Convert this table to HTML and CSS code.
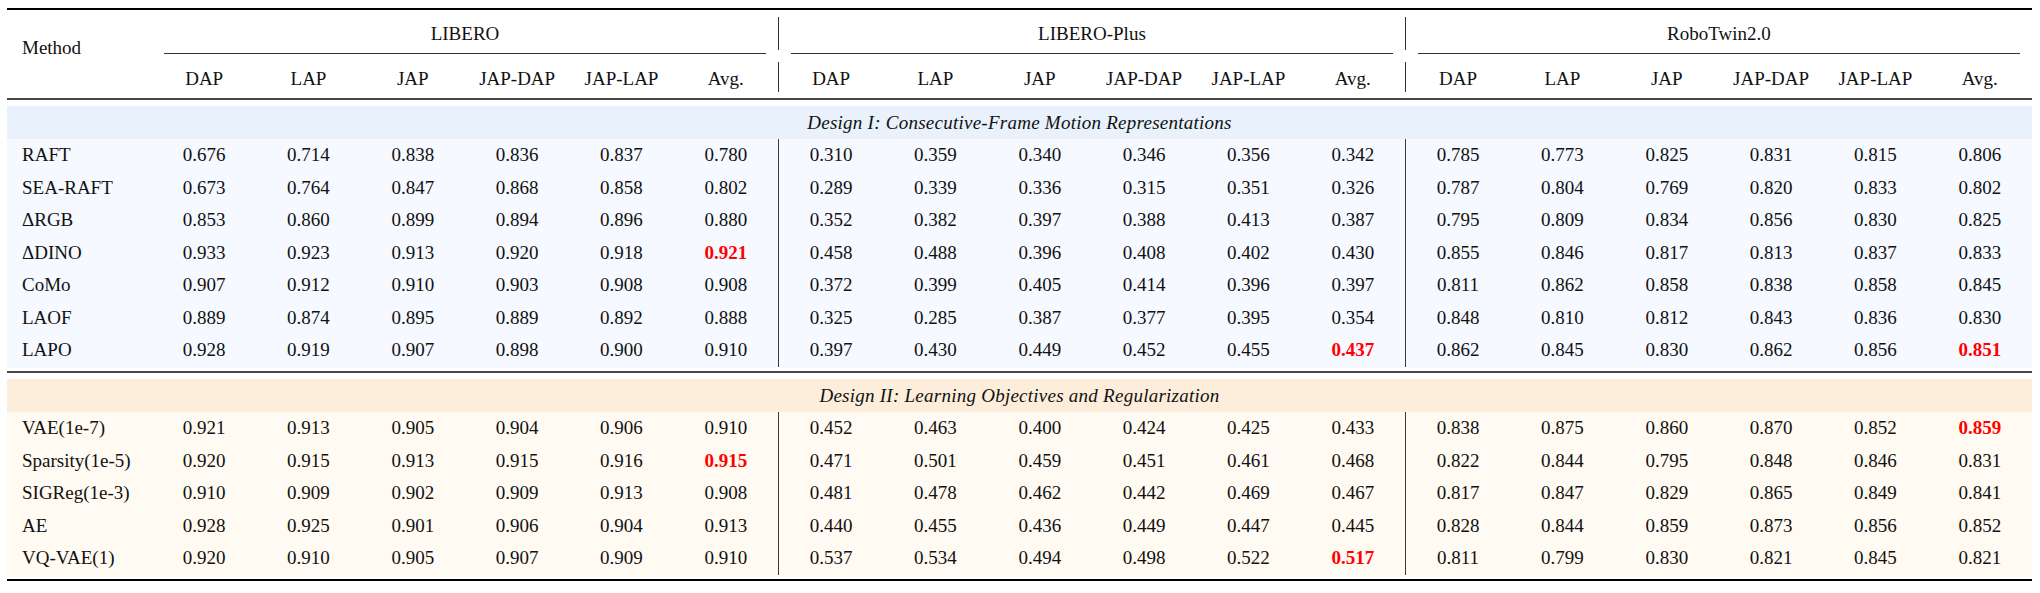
FILE: index.html
```html
<!DOCTYPE html>
<html lang="en">
<head>
  <meta charset="UTF-8">
  <meta name="viewport" content="width=device-width, initial-scale=1.0">
  <title>Motion Representation Ablation</title>
  <link rel="stylesheet" href="styles.css">
</head>
<body>
  <table class="results">
    <colgroup>
      <col class="col-method">
      <col span="6"><col class="col-sep">
      <col span="6"><col class="col-sep">
      <col span="6">
    </colgroup>
    <thead>
      <tr class="groups">
        <th rowspan="2" class="method-head">Method</th>
        <th colspan="6" class="group"><div class="group-title">LIBERO</div></th>
        <th class="sep"><div class="bar"></div></th>
        <th colspan="6" class="group"><div class="group-title">LIBERO-Plus</div></th>
        <th class="sep"><div class="bar"></div></th>
        <th colspan="6" class="group"><div class="group-title">RoboTwin2.0</div></th>
      </tr>
      <tr class="metrics" id="metricRow"></tr>
    </thead>
    <tbody class="design design-one" id="designOne">
      <tr class="band"><td colspan="21"><div class="band-label">Design I: Consecutive-Frame Motion Representations</div></td></tr>
    </tbody>
    <tbody class="design design-two" id="designTwo">
      <tr class="band"><td colspan="21"><div class="band-label">Design II: Learning Objectives and Regularization</div></td></tr>
    </tbody>
  </table>

  <script>
    const metrics = ["DAP", "LAP", "JAP", "JAP-DAP", "JAP-LAP", "Avg."];

    // "*" marks the best value of a block
    const designOne = [
      ["RAFT", "0.676 0.714 0.838 0.836 0.837 0.780", "0.310 0.359 0.340 0.346 0.356 0.342", "0.785 0.773 0.825 0.831 0.815 0.806"],
      ["SEA-RAFT", "0.673 0.764 0.847 0.868 0.858 0.802", "0.289 0.339 0.336 0.315 0.351 0.326", "0.787 0.804 0.769 0.820 0.833 0.802"],
      ["\u0394RGB", "0.853 0.860 0.899 0.894 0.896 0.880", "0.352 0.382 0.397 0.388 0.413 0.387", "0.795 0.809 0.834 0.856 0.830 0.825"],
      ["\u0394DINO", "0.933 0.923 0.913 0.920 0.918 *0.921", "0.458 0.488 0.396 0.408 0.402 0.430", "0.855 0.846 0.817 0.813 0.837 0.833"],
      ["CoMo", "0.907 0.912 0.910 0.903 0.908 0.908", "0.372 0.399 0.405 0.414 0.396 0.397", "0.811 0.862 0.858 0.838 0.858 0.845"],
      ["LAOF", "0.889 0.874 0.895 0.889 0.892 0.888", "0.325 0.285 0.387 0.377 0.395 0.354", "0.848 0.810 0.812 0.843 0.836 0.830"],
      ["LAPO", "0.928 0.919 0.907 0.898 0.900 0.910", "0.397 0.430 0.449 0.452 0.455 *0.437", "0.862 0.845 0.830 0.862 0.856 *0.851"]
    ];

    const designTwo = [
      ["VAE(1e-7)", "0.921 0.913 0.905 0.904 0.906 0.910", "0.452 0.463 0.400 0.424 0.425 0.433", "0.838 0.875 0.860 0.870 0.852 *0.859"],
      ["Sparsity(1e-5)", "0.920 0.915 0.913 0.915 0.916 *0.915", "0.471 0.501 0.459 0.451 0.461 0.468", "0.822 0.844 0.795 0.848 0.846 0.831"],
      ["SIGReg(1e-3)", "0.910 0.909 0.902 0.909 0.913 0.908", "0.481 0.478 0.462 0.442 0.469 0.467", "0.817 0.847 0.829 0.865 0.849 0.841"],
      ["AE", "0.928 0.925 0.901 0.906 0.904 0.913", "0.440 0.455 0.436 0.449 0.447 0.445", "0.828 0.844 0.859 0.873 0.856 0.852"],
      ["VQ-VAE(1)", "0.920 0.910 0.905 0.907 0.909 0.910", "0.537 0.534 0.494 0.498 0.522 *0.517", "0.811 0.799 0.830 0.821 0.845 0.821"]
    ];

    function sepCell(tag) {
      const cell = document.createElement(tag);
      cell.className = "sep";
      if (tag === "th") cell.innerHTML = '<div class="bar"></div>';
      return cell;
    }

    function buildMetricRow() {
      const row = document.getElementById("metricRow");
      for (let b = 0; b < 3; b++) {
        if (b > 0) row.appendChild(sepCell("th"));
        metrics.forEach(name => {
          const th = document.createElement("th");
          th.textContent = name;
          row.appendChild(th);
        });
      }
    }

    function fillDesign(body, rows) {
      rows.forEach(([method, ...blocks]) => {
        const tr = document.createElement("tr");
        tr.className = "row";
        const name = document.createElement("td");
        name.className = "method";
        name.textContent = method;
        tr.appendChild(name);

        blocks.forEach((block, b) => {
          if (b > 0) tr.appendChild(sepCell("td"));
          block.split(" ").forEach(value => {
            const td = document.createElement("td");
            if (value.startsWith("*")) {
              td.className = "best";
              value = value.slice(1);
            }
            td.textContent = value;
            tr.appendChild(td);
          });
        });
        body.appendChild(tr);
      });

      const tail = document.createElement("tr");
      tail.className = "tail";
      tail.innerHTML = '<td colspan="21"><div class="tail-fill"></div></td>';
      body.appendChild(tail);
    }

    buildMetricRow();
    fillDesign(document.getElementById("designOne"), designOne);
    fillDesign(document.getElementById("designTwo"), designTwo);
  </script>
</body>
</html>
```

FILE: styles.css
```css
body {
  margin: 8px 8px 8px 7px;
  background: #ffffff;
  color: #111;
  font-family: "Liberation Serif", "Times New Roman", serif;
  font-size: 19px;
}

.results {
  width: 2025px;
  table-layout: fixed;
  border-collapse: separate;
  border-spacing: 0;
}

.col-method {
  width: 145px;
}

.col-sep {
  width: 1px;
}

th, td {
  padding: 0;
  font-weight: normal;
  text-align: center;
  white-space: nowrap;
}

/* header */

.groups th {
  border-top: 2px solid #000;
  vertical-align: top;
}

.method-head {
  text-align: left;
  padding: 28px 0 0 15px;
  line-height: 20px;
  border-bottom: 2px solid #474747;
}

.groups .group {
  padding: 14px 12px 2px;
}

.group-title {
  line-height: 20px;
  padding-bottom: 9px;
  border-bottom: 1px solid #333;
}

.groups .bar {
  width: 1px;
  height: 33px;
  margin-top: 7px;
  background: #333;
}

.metrics th {
  padding: 13px 0 9px;
  line-height: 20px;
  vertical-align: top;
  border-bottom: 2px solid #474747;
}

.metrics th.sep {
  padding: 0;
}

.metrics .bar {
  width: 1px;
  height: 30px;
  margin-top: 6px;
  background: #333;
}

/* design blocks */

.band td {
  padding-top: 6px;
}

.band-label {
  height: 33px;
  line-height: 33px;
  font-style: italic;
  letter-spacing: 0.25px;
}

.row td {
  height: 32.5px;
  line-height: 20px;
  vertical-align: middle;
}

.row td.method {
  text-align: left;
  padding-left: 15px;
}

.row td.best {
  color: #f00;
  font-weight: bold;
}

.design-one .band-label {
  background: #e8f1fc;
}

.design-one .row td,
.design-one .tail-fill {
  background: #f6f9ff;
}

.design-two .band-label {
  background: #fdeedb;
}

.design-two .row td,
.design-two .tail-fill {
  background: #fffaf2;
}

.design-one .row td.sep,
.design-two .row td.sep {
  background: #3a3a3a;
}

.design-one .tail td {
  padding-bottom: 3px;
  border-bottom: 2px solid #474747;
}

.design-one .tail-fill {
  height: 1.5px;
}

.design-two .tail td {
  padding-bottom: 2px;
  border-bottom: 2px solid #000;
}

.design-two .tail-fill {
  height: 2px;
}
```
